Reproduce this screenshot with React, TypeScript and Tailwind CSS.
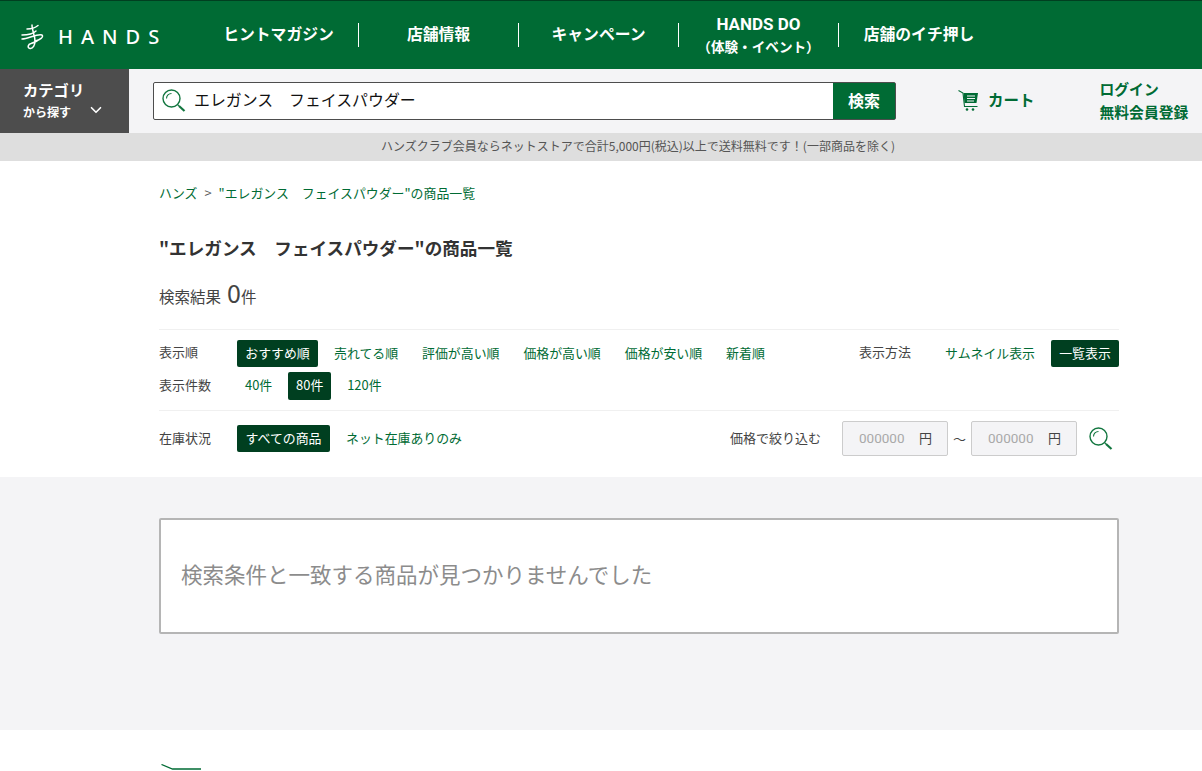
import { ChevronDown } from "lucide-react"

const jp = "font-['Noto_Sans_CJK_JP','Noto_Sans',sans-serif]"

function SearchIcon({ className }: { className?: string }) {
  return (
    <svg viewBox="0 0 24 24" fill="none" stroke="#12763f" className={className}>
      <circle cx="9.500" cy="9.500" r="8.500" strokeWidth="1.400" />
      <path d="M4.500 9.500a5 5 0 0 1 5-5" strokeWidth="1.100" />
      <path d="M15.600 15.600l1.600 1.600" strokeWidth="1.100" />
      <path d="M17 17l5.500 5" strokeWidth="2.200" />
    </svg>
  )
}

function Logo() {
  return (
    <svg viewBox="0 0 24 26" fill="none" stroke="#fff" strokeWidth="1.500" strokeLinecap="round" className="w-[24px] h-[26px]">
      <path d="M7 5C10 5 15 4 18 1.500" />
      <path d="M2 11C8 11 14 9 16 7" />
      <path d="M2 15C8 15 18 9 22 11C24 13 20 16 15 17" />
      <path d="M12 1C12 6 15 12 15 17C15 21 13 25 10 24.500C7 24 8 20 11 19.500C13 19 15 18 17 17" />
    </svg>
  )
}

function CartIcon() {
  return (
    <svg viewBox="0 0 22 22" fill="none" stroke="#006b34" className="w-[22px] h-[22px]">
      <path d="M.5 .5l4.500 2.500l1.500 13.500h13" strokeWidth="1.100" />
      <path d="M5.500 3h14.500l-1.500 10h-12z" fill="#006b34" stroke="none" />
      <path d="M9 6h8M9 8.500h8M9 11h7" stroke="#f4f4f6" strokeWidth="1" />
      <circle cx="9" cy="19.500" r="1.300" fill="#006b34" stroke="none" />
      <circle cx="15" cy="19.500" r="1.300" fill="#006b34" stroke="none" />
    </svg>
  )
}

function NavItem({ children, last }: { children: React.ReactNode; last?: boolean }) {
  return (
    <div className={`w-[160px] h-[24px] flex items-center justify-center text-white font-bold text-[15.800px] leading-[22px] text-center ${last ? "" : "border-r border-white"}`}>
      <div>{children}</div>
    </div>
  )
}

function Pill({ children, active, className }: { children: React.ReactNode; active?: boolean; className?: string }) {
  return (
    <span className={`flex items-center justify-center whitespace-nowrap rounded-[2px] text-[12.900px] px-2 pb-[2px] ${active ? "bg-[#003f20] text-white" : "text-[#006b34]"} ${className ?? ""}`}>
      {children}
    </span>
  )
}

function PriceBox() {
  return (
    <div className="w-[106px] h-[35px] flex items-center justify-between pl-[16px] pr-[15px] bg-[#f4f4f6] border border-[#cccccc] rounded-[2px] text-[13px]">
      <span className="text-[#a9a9a9] font-['Roboto',sans-serif] text-[13.500px]">000000</span>
      <span className="text-[#444] pb-[2px]">円</span>
    </div>
  )
}

export default function App() {
  return (
    <div className={`${jp} h-[771px] w-[1202px] overflow-hidden bg-white text-[#333]`}>
      {/* top nav */}
      <header className="h-[69px] bg-[#006b34] border-t border-[#003f20] flex items-center">
        <div className="w-[199px] pl-[20px] flex items-center gap-[14px] mt-[3px]">
          <Logo />
          <span className="text-white text-[20px] tracking-[8px] font-['Noto_Sans',sans-serif] font-medium leading-none">HANDS</span>
        </div>
        <NavItem><span className="block pb-[3px]">ヒントマガジン</span></NavItem>
        <NavItem><span className="block pb-[3px]">店舗情報</span></NavItem>
        <NavItem><span className="block pb-[3px]">キャンペーン</span></NavItem>
        <NavItem>
          <span className="block font-['Roboto',sans-serif] text-[17px] leading-[22px]">HANDS DO</span>
          <span className="block text-[13.600px] leading-[22px]">（体験・イベント）</span>
        </NavItem>
        <NavItem last><span className="block pb-[3px]">店舗のイチ押し</span></NavItem>
      </header>

      {/* search row */}
      <div className="h-[64px] bg-[#f4f4f6] flex items-center">
        <div className="w-[129px] h-full bg-[#4d4d4d] text-white font-bold pl-[23px] pt-[8px]">
          <div className="text-[15.300px] leading-[24px]">カテゴリ</div>
          <div className="flex items-center text-[12px] leading-[21px]">
            から探す
            <ChevronDown className="w-[18px] h-[18px] ml-[16px] -mt-[3px]" strokeWidth={2.200} />
          </div>
        </div>
        <div className="ml-[24px] w-[743px] h-[38px] flex bg-white border border-[#4d4d4d] rounded-[2px]">
          <div className="flex-1 flex items-center pl-[8px] gap-[8px]">
            <SearchIcon className="w-[24px] h-[24px]" />
            <span className="text-[15.900px] text-[#111] pb-[3px]">エレガンス　フェイスパウダー</span>
          </div>
          <div className="w-[62px] bg-[#006b34] text-white font-bold text-[16px] pb-[3px] flex items-center justify-center">検索</div>
        </div>
        <div className="ml-[62px] flex items-center gap-[8px] text-[#006b34] font-bold text-[15.500px]">
          <CartIcon />
          <span className="pb-[3px]">カート</span>
        </div>
        <div className="ml-[65px] text-[#006b34] font-bold text-[14.800px] leading-[23px] pb-[3px]">
          <div>ログイン</div>
          <div>無料会員登録</div>
        </div>
      </div>

      {/* notice */}
      <div className="h-[28px] bg-[#dedede] flex items-center pl-[381px] pb-[2px] text-[12px] text-[#555]">
        ハンズクラブ会員ならネットストアで合計5,000円(税込)以上で送料無料です！(一部商品を除く)
      </div>

      {/* results head */}
      <main className="w-[960px] ml-[159px]">
        <div className="h-[316px]">
          <div className="pt-[23px] text-[12.900px] leading-[18px] text-[#006b34]">
            ハンズ<span className="text-[#555] mx-[7px]">&gt;</span>"エレガンス　フェイスパウダー"の商品一覧
          </div>
          <h1 className="mt-[34px] text-[17.600px] leading-[24px] font-bold text-[#333]">"エレガンス　フェイスパウダー"の商品一覧</h1>
          <div className="mt-[16px] h-[32px] flex items-baseline text-[15.500px] text-[#444]">
            検索結果<span className="text-[25px] ml-[6px] leading-[32px]">0</span>件
          </div>

          <div className="mt-[21px] border-t border-[#f0f0f0] pt-[10px]">
            <div className="flex h-[27px]">
              <span className="w-[78px] flex items-center pb-[3px] text-[13px] text-[#444]">表示順</span>
              <Pill active className="w-[81px]">おすすめ順</Pill>
              <Pill className="ml-[8px]">売れてる順</Pill>
              <Pill className="ml-[8px]">評価が高い順</Pill>
              <Pill className="ml-[8px]">価格が高い順</Pill>
              <Pill className="ml-[8px]">価格が安い順</Pill>
              <Pill className="ml-[8px]">新着順</Pill>
              <span className="ml-auto mr-[26px] flex items-center pb-[3px] text-[13px] text-[#444]">表示方法</span>
              <Pill className="mr-[8px]">サムネイル表示</Pill>
              <Pill active className="w-[68px]">一覧表示</Pill>
            </div>
            <div className="flex h-[28px] mt-[5px]">
              <span className="w-[78px] flex items-center pb-[3px] text-[13px] text-[#444]">表示件数</span>
              <Pill>40件</Pill>
              <Pill active className="ml-[8px] w-[43px]">80件</Pill>
              <Pill className="ml-[8px]">120件</Pill>
            </div>
          </div>

          <div className="mt-[10px] border-t border-[#f0f0f0] flex items-center h-[56px]">
            <span className="w-[78px] pb-[2px] text-[13px] text-[#444]">在庫状況</span>
            <Pill active className="h-[27px] w-[93px]">すべての商品</Pill>
            <Pill className="ml-[8px]">ネット在庫ありのみ</Pill>
            <span className="ml-auto mr-[21px] pb-[2px] text-[13px] text-[#444]">価格で絞り込む</span>
            <PriceBox />
            <span className="mx-[5px] text-[13px] text-[#444]">～</span>
            <PriceBox />
            <SearchIcon className="w-[24px] h-[24px] ml-[12px] mr-[6px]" />
          </div>
        </div>
      </main>

      {/* empty result */}
      <section className="h-[253px] bg-[#f4f4f6] pt-[41px]">
        <div className="ml-[159px] w-[960px] h-[116px] bg-white border-2 border-[#b5b5b5] rounded-[2px] flex items-center pl-[20px] pb-[4px] text-[21.500px] text-[#8c8c8c]">
          検索条件と一致する商品が見つかりませんでした
        </div>
      </section>

      {/* footer logo, cut off by the window */}
      <footer className="h-[41px] pl-[161px] pt-[34px]">
        <svg viewBox="0 0 40 7" className="w-[40px] h-[7px]" fill="none" stroke="#006b34" strokeWidth="1.300">
          <path d="M.5 .5l11 4.500h28.500" />
        </svg>
      </footer>
    </div>
  )
}
